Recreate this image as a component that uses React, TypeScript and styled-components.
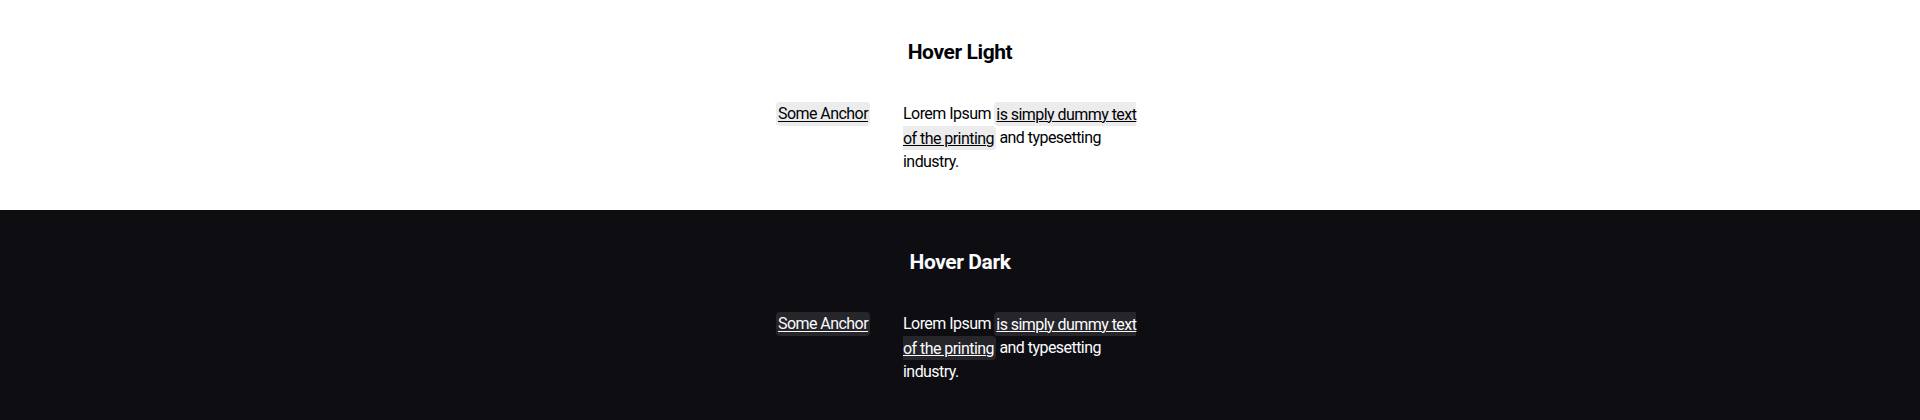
import React from "react";
import styled, { createGlobalStyle, css } from "styled-components";

type Tone = "light" | "dark";

const palette = {
  light: { bg: "#ffffff", text: "#010205", hover: "#ececed" },
  dark: { bg: "#0e0e12", text: "#fbfcff", hover: "#25252a" },
};

const GlobalStyle = createGlobalStyle`
  html, body {
    margin: 0;
    padding: 0;
  }
  body {
    font-family: Roboto, "Liberation Sans", Arial, sans-serif;
    -webkit-font-smoothing: antialiased;
  }
`;

const Section = styled.section<{ $tone: Tone }>`
  box-sizing: border-box;
  height: 210px;
  padding-top: 38px;
  background-color: ${(p) => palette[p.$tone].bg};
  color: ${(p) => palette[p.$tone].text};
  display: flex;
  flex-direction: column;
  align-items: center;
`;

const Heading = styled.h2`
  margin: 0 0 36px;
  font-size: 21px;
  line-height: 28px;
  font-weight: 700;
  letter-spacing: -0.4px;
`;

// two columns: anchor on the left, paragraph on the right
const Row = styled.div`
  display: grid;
  grid-template-columns: 127px 241px;
  align-items: start;
  font-size: 16px;
  line-height: 24px;
  letter-spacing: -0.55px;
`;

const highlight = css<{ $tone: Tone }>`
  color: inherit;
  text-decoration: underline;
  text-decoration-thickness: 1px;
  text-underline-offset: 2px;
  background-color: ${(p) => palette[p.$tone].hover};
  border-radius: 4px;
`;

const Anchor = styled.a<{ $tone: Tone }>`
  ${highlight};
  justify-self: start;
  display: block;
  padding: 0 2px;
`;

const Text = styled.p`
  margin: 0;
`;

const InlineLink = styled.a<{ $tone: Tone }>`
  ${highlight};
  padding: 2.5px 2px;
`;

const HoverBlock: React.FC<{ tone: Tone; title: string }> = ({ tone, title }) => (
  <Section $tone={tone}>
    <Heading>{title}</Heading>
    <Row>
      <Anchor $tone={tone} href="#">
        Some Anchor
      </Anchor>
      <Text>
        Lorem Ipsum{" "}
        <InlineLink $tone={tone} href="#">
          is simply dummy text of the printing
        </InlineLink>{" "}
        and typesetting industry.
      </Text>
    </Row>
  </Section>
);

const App: React.FC = () => {
  return (
    <>
      <GlobalStyle />
      <HoverBlock tone="light" title="Hover Light" />
      <HoverBlock tone="dark" title="Hover Dark" />
    </>
  );
};

export default App;
